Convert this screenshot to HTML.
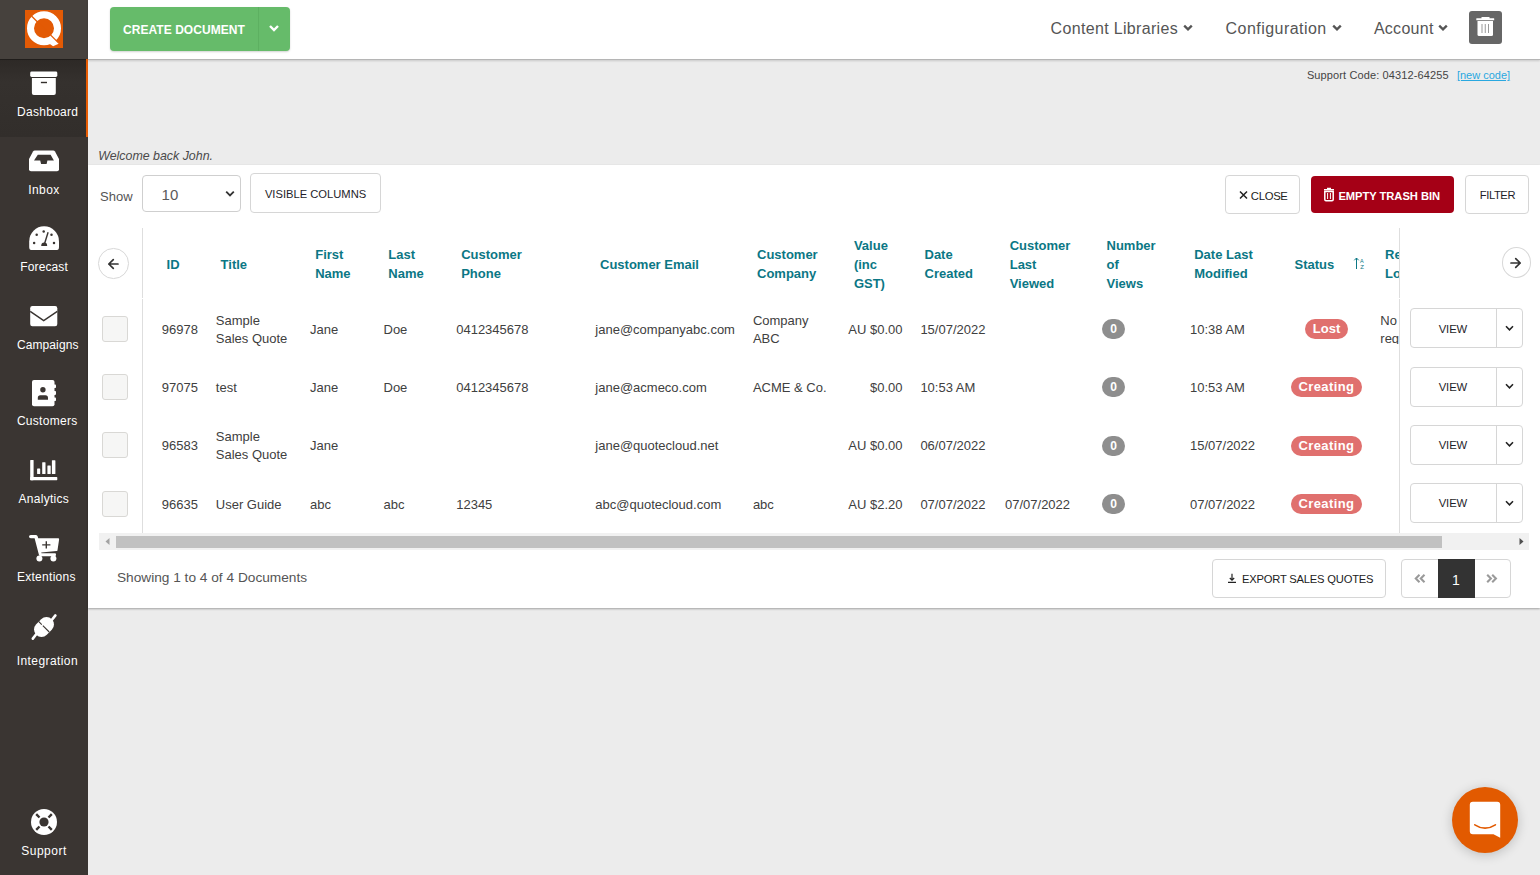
<!DOCTYPE html>
<html><head><meta charset="utf-8">
<style>
*{box-sizing:border-box;margin:0;padding:0}
html,body{width:1540px;height:875px;overflow:hidden}
body{font-family:"Liberation Sans",sans-serif;background:#ececec;position:relative;color:#333}
.a{position:absolute}
.t{position:absolute;white-space:nowrap}
.bx{position:absolute;border:1px solid #d9d9d9;border-radius:3px;background:#fff}
</style></head><body>
<div class="a" style="left:0;top:0;width:88px;height:875px;background:#3a3532"></div>
<div class="a" style="left:0;top:0;width:88px;height:59px;background:#46413d"></div>
<svg class="a" style="left:25px;top:10px" width="38" height="38" viewBox="0 0 38 38">
<rect width="38" height="38" fill="#e35a05"/>
<circle cx="19" cy="18.2" r="13.5" fill="none" stroke="#fff" stroke-width="7"/>
<path d="M25 25 L34.2 33.6 L28.1 36.2 L25.2 34.2 Z" fill="#fff"/>
<path d="M6.5 6 L34.5 33.9" stroke="#e35a05" stroke-width="1.3"/>
</svg>
<div class="a" style="left:0;top:59px;width:86px;height:78px;background:linear-gradient(#2d2926,#35312e 30%,#322e2b)"></div>
<div class="a" style="left:0;top:59px;width:86px;height:1px;background:#201d1b"></div>
<div class="a" style="left:86px;top:59px;width:2px;height:78px;background:#e85d04"></div>
<svg class="a" style="left:0;top:0" width="88" height="875" viewBox="0 0 88 875">
<g fill="#fff">
<!-- dashboard archive -->
<rect x="30.2" y="71.6" width="27.1" height="5.4" rx="1.4"/>
<path d="M31.9 78.1 H55.8 V93 Q55.8 94.9 53.9 94.9 H33.8 Q31.9 94.9 31.9 93 Z"/>
<!-- inbox -->
<path d="M34.8 150.6 H53.2 Q54.4 150.6 55 151.6 L59 159 V169.2 Q59 171.2 57 171.2 H31 Q29 171.2 29 169.2 V159 L33 151.6 Q33.6 150.6 34.8 150.6 Z"/>
<!-- forecast gauge -->
<path d="M31.2 249.9 Q29.2 249.9 29.2 247 V241.4 A14.9 15.2 0 0 1 59 241.4 V247 Q59 249.9 57 249.9 Z"/>
<!-- envelope -->
<rect x="30.2" y="306" width="27.1" height="20.2" rx="2.2"/>
<!-- address book -->
<rect x="32" y="380" width="22.5" height="26.3" rx="2"/>
<rect x="53" y="384.5" width="3" height="3.6" rx=".8"/>
<rect x="53" y="390.9" width="3" height="4" rx=".8"/>
<rect x="53" y="397.5" width="3" height="3.5" rx=".8"/>
<!-- analytics -->
<rect x="30.2" y="460" width="3.4" height="20.2" rx=".6"/>
<rect x="30.2" y="477.1" width="27.1" height="3.1" rx=".6"/>
<rect x="37.1" y="468.5" width="3.1" height="5.5" rx=".5"/>
<rect x="42.2" y="462.3" width="3.3" height="11.7" rx=".5"/>
<rect x="47.4" y="465.4" width="3.3" height="8.6" rx=".5"/>
<rect x="51.9" y="460.3" width="3.5" height="13.7" rx=".5"/>
<!-- cart -->
<path d="M30.8 535 H36 Q37.4 535 37.7 536.5 L38.2 538.3 H58.2 Q59.3 538.3 59.1 539.4 L57.5 550.2 Q57.3 551 56.5 551.1 L41.2 552.4 L41.5 553.2 H55 Q56 553.2 56 554.6 Q56 556.2 55 556.2 H40.5 Q39.2 556.2 38.9 554.8 L34.6 538.2 H30.8 Q29 538.2 29 536.6 Q29 535 30.8 535 Z"/>
<circle cx="39.4" cy="558.4" r="3"/>
<circle cx="53.4" cy="558.4" r="3"/>
<!-- plug -->
<rect x="33" y="619.5" width="22" height="15" rx="7.5" transform="rotate(-45 44 627)"/>
<path d="M51 621 L55.4 615.4" stroke="#fff" stroke-width="2.6" stroke-linecap="round"/>
<path d="M37 633.2 L32.8 638.6" stroke="#fff" stroke-width="2.6" stroke-linecap="round"/>
<!-- support ring -->
<circle cx="44" cy="822" r="13"/>
</g>
<g fill="DDD">
<rect x="40.9" y="81.8" width="6.1" height="1.4" fill="#332f2c"/>
<path d="M37.8 154.8 H50.6 L53.9 160.6 H47.4 L46.6 164 H41.1 L40.2 160.6 H34 Z" fill="#3a3532"/>
<circle cx="36.7" cy="234.8" r="1.25" fill="#3a3532"/>
<circle cx="43.7" cy="231.5" r="1.25" fill="#3a3532"/>
<circle cx="51.5" cy="234.8" r="1.25" fill="#3a3532"/>
<circle cx="34.1" cy="243" r="1.25" fill="#3a3532"/>
<circle cx="54" cy="243" r="1.25" fill="#3a3532"/>
<path d="M44.6 243.5 L48.1 232.2" stroke="#3a3532" stroke-width="1.4"/>
<path d="M41.2 245.9 A3 3.4 0 0 1 47.2 245.9 Z" fill="#3a3532"/>
<path d="M30.2 311.4 L43.7 320.6 L57.3 311.4" fill="none" stroke="#3a3532" stroke-width="1.5"/>
<circle cx="42.9" cy="389.8" r="2.7" fill="#3a3532"/>
<path d="M37.8 399.8 V397.8 Q37.8 395.2 40.4 395.2 H45.4 Q48 395.2 48 397.8 V399.8 Z" fill="#3a3532"/>
<path d="M46.3 541.2 V548.6 M42.2 544.9 H50.4" stroke="#3a3532" stroke-width="1.4"/>
<path d="M38.6 621.4 L49.6 632.4" stroke="#3a3532" stroke-width="1.1" stroke-dasharray="4.5 1.5 9"/>
<circle cx="44" cy="822" r="4.6" fill="#3a3532"/>
<path d="M36.2 814.2 L39.5 817.5 M51.8 814.2 L48.5 817.5 M36.2 829.8 L39.5 826.5 M51.8 829.8 L48.5 826.5" stroke="#3a3532" stroke-width="2.4"/>
</g>
</svg>
<div class="t" style="left:17px;top:103.6px;font-size:12px;line-height:16px;color:#fff;letter-spacing:0.29px;">Dashboard</div>
<div class="t" style="left:28.2px;top:181.6px;font-size:12px;line-height:16px;color:#fff;letter-spacing:0.42px;">Inbox</div>
<div class="t" style="left:20.3px;top:258.6px;font-size:12px;line-height:16px;color:#fff;letter-spacing:0.11px;">Forecast</div>
<div class="t" style="left:16.9px;top:336.6px;font-size:12px;line-height:16px;color:#fff;letter-spacing:0.11px;">Campaigns</div>
<div class="t" style="left:16.9px;top:413.3px;font-size:12px;line-height:16px;color:#fff;letter-spacing:0.29px;">Customers</div>
<div class="t" style="left:18.6px;top:490.6px;font-size:12px;line-height:16px;color:#fff;letter-spacing:0.27px;">Analytics</div>
<div class="t" style="left:16.9px;top:568.6px;font-size:12px;line-height:16px;color:#fff;letter-spacing:0.29px;">Extentions</div>
<div class="t" style="left:16.8px;top:652.6px;font-size:12px;line-height:16px;color:#fff;letter-spacing:0.41px;">Integration</div>
<div class="t" style="left:21.2px;top:842.8px;font-size:12px;line-height:16px;color:#fff;letter-spacing:0.51px;">Support</div>
<div class="a" style="left:88px;top:0;width:1452px;height:60px;background:#fff;border-bottom:1px solid #b5b5b5;box-shadow:0 1px 2px rgba(0,0,0,.15)"></div>
<div class="a" style="left:110px;top:7px;width:180px;height:44px;background:#66bb6a;border-radius:4px;box-shadow:0 1px 2px rgba(0,0,0,.18)"></div>
<div class="a" style="left:258px;top:7px;width:1px;height:44px;background:#5db061"></div>
<div class="t" style="left:123px;top:21.8px;font-size:12px;line-height:16px;color:#fff;font-weight:bold;letter-spacing:0.05px;">CREATE DOCUMENT</div>
<svg class="a" style="left:268px;top:24px" width="12" height="9" viewBox="0 0 12 9"><path d="M2 2 L6 6 L10 2" fill="none" stroke="#fff" stroke-width="2.4"/></svg>
<div class="t" style="left:1050.6px;top:18.2px;font-size:16px;line-height:21px;color:#555;letter-spacing:0.33px;">Content Libraries</div>
<div class="t" style="left:1225.6px;top:18.2px;font-size:16px;line-height:21px;color:#555;letter-spacing:0.45px;">Configuration</div>
<div class="t" style="left:1373.9px;top:18.2px;font-size:16px;line-height:21px;color:#555;letter-spacing:0.28px;">Account</div>
<svg class="a" style="left:1183px;top:24px" width="10" height="8" viewBox="0 0 10 8"><path d="M1.2 1.6 L5 5.4 L8.8 1.6" fill="none" stroke="#555" stroke-width="2.3"/></svg>
<svg class="a" style="left:1331.5px;top:24px" width="10" height="8" viewBox="0 0 10 8"><path d="M1.2 1.6 L5 5.4 L8.8 1.6" fill="none" stroke="#555" stroke-width="2.3"/></svg>
<svg class="a" style="left:1437.8px;top:24px" width="10" height="8" viewBox="0 0 10 8"><path d="M1.2 1.6 L5 5.4 L8.8 1.6" fill="none" stroke="#555" stroke-width="2.3"/></svg>
<div class="a" style="left:1469px;top:11px;width:33px;height:33px;background:#666;border-radius:3px"></div>
<svg class="a" style="left:1469px;top:11px" width="33" height="33" viewBox="0 0 33 33">
<path d="M12.5 6 H20.5 V7.2 H24.8 Q25.2 7.2 25.2 7.6 V9.2 H7.3 V7.6 Q7.3 7.2 7.7 7.2 H12.5 Z" fill="#fff"/>
<path d="M8.5 10 H24 V23.5 Q24 25 22.5 25 H10 Q8.5 25 8.5 23.5 Z" fill="#fff"/>
<path d="M13 13 V22 M16.25 13 V22 M19.5 13 V22" stroke="#999" stroke-width="1"/>
</svg>
<div class="t" style="left:1306.9px;top:68.1px;font-size:11px;line-height:14px;color:#444;letter-spacing:0.12px;">Support Code: 04312-64255</div>
<div class="t" style="left:1456.9px;top:68.1px;font-size:11px;line-height:14px;color:#29a8e0;text-decoration:underline">[new code]</div>
<div class="t" style="left:98.2px;top:148.1px;font-size:12.4px;line-height:16px;color:#4a4a4a;font-style:italic">Welcome back John.</div>
<div class="a" style="left:88px;top:165px;width:1452px;height:443px;background:#fff;box-shadow:0 1px 2px rgba(0,0,0,.32)"></div>
<div class="t" style="left:100px;top:187.6px;font-size:13px;line-height:17px;color:#555;letter-spacing:0.05px;">Show</div>
<div class="bx" style="left:142px;top:175px;width:99px;height:37px;border-color:#cfcfcf;border-radius:4px"></div>
<div class="t" style="left:161.5px;top:184.8px;font-size:15px;line-height:20px;color:#5a5a5a;letter-spacing:0.2px;">10</div>
<svg class="a" style="left:225px;top:189.5px" width="10" height="8" viewBox="0 0 10 8"><path d="M1.2 1.6 L5 5.4 L8.8 1.6" fill="none" stroke="#333" stroke-width="1.8"/></svg>
<div class="bx" style="left:250px;top:173px;width:131px;height:40px;border-color:#d6d6d6;border-radius:4px"></div>
<div class="t" style="left:264.9px;top:187.1px;font-size:11.2px;line-height:15px;color:#1e1e2a;">VISIBLE COLUMNS</div>
<div class="bx" style="left:1225px;top:175px;width:75px;height:39px;border-color:#d6d6d6;border-radius:4px"></div>
<svg class="a" style="left:1239px;top:190px" width="9" height="10" viewBox="0 0 9 10"><path d="M1 1.5 L8 8.5 M8 1.5 L1 8.5" stroke="#222" stroke-width="1.5"/></svg>
<div class="t" style="left:1250.8px;top:188.8px;font-size:11.3px;line-height:15px;color:#222;letter-spacing:-0.3px;">CLOSE</div>
<div class="a" style="left:1311px;top:176px;width:143px;height:37px;background:#a50016;border-radius:4px"></div>
<svg class="a" style="left:1323px;top:187px" width="12" height="15" viewBox="0 0 12 15">
<path d="M4 .8 H8 V2 H11 V3.6 H1 V2 H4 Z" fill="#fff"/>
<path d="M1.8 4.4 H10.2 V12.6 Q10.2 13.8 9 13.8 H3 Q1.8 13.8 1.8 12.6 Z" fill="none" stroke="#fff" stroke-width="1.5"/>
<path d="M4.6 6 V12 M7.4 6 V12" stroke="#fff" stroke-width="1"/>
</svg>
<div class="t" style="left:1338.4px;top:188.8px;font-size:11.2px;line-height:15px;color:#fff;font-weight:bold;letter-spacing:-0.05px;">EMPTY TRASH BIN</div>
<div class="bx" style="left:1465px;top:175px;width:64px;height:39px;border-color:#d6d6d6;border-radius:4px"></div>
<div class="t" style="left:1479.8px;top:187.8px;font-size:11.2px;line-height:15px;color:#1e1e2a;letter-spacing:-0.4px;">FILTER</div>
<div class="a" style="left:98px;top:248px;width:30.5px;height:30.5px;border:1px solid #d8d8d8;border-radius:50%;background:#fff"></div>
<svg class="a" style="left:106px;top:256.5px" width="14" height="14" viewBox="0 0 14 14"><path d="M12 7 H2.8 M7.3 2.6 L2.8 7 L7.3 11.4" fill="none" stroke="#333" stroke-width="1.7" stroke-linecap="round" stroke-linejoin="round"/></svg>
<div class="a" style="left:1502px;top:247px;width:29px;height:30.5px;border:1px solid #d8d8d8;border-radius:50%;background:#fff"></div>
<svg class="a" style="left:1509px;top:255.5px" width="14" height="14" viewBox="0 0 14 14"><path d="M2 7 H11.2 M6.7 2.6 L11.2 7 L6.7 11.4" fill="none" stroke="#333" stroke-width="1.7" stroke-linecap="round" stroke-linejoin="round"/></svg>
<div class="a" style="left:142px;top:228px;width:1px;height:305px;background:#dedede"></div>
<div class="a" style="left:1399px;top:228px;width:1px;height:305px;background:#dedede"></div>
<div class="a" style="left:142px;top:297.5px;width:1px;height:1px;background:#fff"></div>
<div class="a" style="left:1399px;top:297.5px;width:1px;height:1px;background:#fff"></div>
<div class="t" style="left:166.6px;top:256.1px;font-size:13px;line-height:17px;color:#0b7785;font-weight:bold;">ID</div>
<div class="t" style="left:220.6px;top:256.1px;font-size:13px;line-height:17px;color:#0b7785;font-weight:bold;">Title</div>
<div class="t" style="left:315.2px;top:246.1px;font-size:13px;line-height:17px;color:#0b7785;font-weight:bold;">First</div>
<div class="t" style="left:315.2px;top:265.0px;font-size:13px;line-height:17px;color:#0b7785;font-weight:bold;">Name</div>
<div class="t" style="left:388.3px;top:246.1px;font-size:13px;line-height:17px;color:#0b7785;font-weight:bold;">Last</div>
<div class="t" style="left:388.3px;top:265.0px;font-size:13px;line-height:17px;color:#0b7785;font-weight:bold;">Name</div>
<div class="t" style="left:461.2px;top:246.1px;font-size:13px;line-height:17px;color:#0b7785;font-weight:bold;">Customer</div>
<div class="t" style="left:461.2px;top:265.0px;font-size:13px;line-height:17px;color:#0b7785;font-weight:bold;">Phone</div>
<div class="t" style="left:600px;top:256.1px;font-size:13px;line-height:17px;color:#0b7785;font-weight:bold;">Customer Email</div>
<div class="t" style="left:757px;top:246.1px;font-size:13px;line-height:17px;color:#0b7785;font-weight:bold;">Customer</div>
<div class="t" style="left:757px;top:265.0px;font-size:13px;line-height:17px;color:#0b7785;font-weight:bold;">Company</div>
<div class="t" style="left:853.9px;top:237.2px;font-size:13px;line-height:17px;color:#0b7785;font-weight:bold;">Value</div>
<div class="t" style="left:853.9px;top:256.1px;font-size:13px;line-height:17px;color:#0b7785;font-weight:bold;">(inc</div>
<div class="t" style="left:853.9px;top:275.0px;font-size:13px;line-height:17px;color:#0b7785;font-weight:bold;">GST)</div>
<div class="t" style="left:924.5px;top:246.1px;font-size:13px;line-height:17px;color:#0b7785;font-weight:bold;">Date</div>
<div class="t" style="left:924.5px;top:265.0px;font-size:13px;line-height:17px;color:#0b7785;font-weight:bold;">Created</div>
<div class="t" style="left:1009.7px;top:237.2px;font-size:13px;line-height:17px;color:#0b7785;font-weight:bold;">Customer</div>
<div class="t" style="left:1009.7px;top:256.1px;font-size:13px;line-height:17px;color:#0b7785;font-weight:bold;">Last</div>
<div class="t" style="left:1009.7px;top:275.0px;font-size:13px;line-height:17px;color:#0b7785;font-weight:bold;">Viewed</div>
<div class="t" style="left:1106.5px;top:237.2px;font-size:13px;line-height:17px;color:#0b7785;font-weight:bold;">Number</div>
<div class="t" style="left:1106.5px;top:256.1px;font-size:13px;line-height:17px;color:#0b7785;font-weight:bold;">of</div>
<div class="t" style="left:1106.5px;top:275.0px;font-size:13px;line-height:17px;color:#0b7785;font-weight:bold;">Views</div>
<div class="t" style="left:1194.2px;top:246.1px;font-size:13px;line-height:17px;color:#0b7785;font-weight:bold;">Date Last</div>
<div class="t" style="left:1194.2px;top:265.0px;font-size:13px;line-height:17px;color:#0b7785;font-weight:bold;">Modified</div>
<div class="t" style="left:1294.5px;top:256.1px;font-size:13px;line-height:17px;color:#0b7785;font-weight:bold;">Status</div>
<div class="a" style="left:1380px;top:228px;width:19px;height:72px;overflow:hidden"><div class="t" style="left:5px;top:18.1px;font-size:13px;line-height:17px;color:#0b7785;font-weight:bold;">Re</div>
<div class="t" style="left:5px;top:37.0px;font-size:13px;line-height:17px;color:#0b7785;font-weight:bold;">Lo</div>
</div>
<svg class="a" style="left:1353px;top:256px" width="14" height="15" viewBox="0 0 14 15">
<path d="M3.5 13 V2 M1.3 4.3 L3.5 2 L5.7 4.3" fill="none" stroke="#0b7785" stroke-width="1"/>
<text x="7" y="6.5" font-size="5.5" fill="#0b7785" font-family="Liberation Sans">A</text>
<text x="7.2" y="13" font-size="6" fill="#0b7785" font-family="Liberation Sans">Z</text>
</svg>
<div class="a" style="left:102px;top:316.4px;width:26px;height:26px;border:1px solid #d9d8d5;border-radius:3px;background:#f6f6f5"></div>
<div class="t" style="left:161.8px;top:320.9px;font-size:13px;line-height:17px;color:#404040;">96978</div>
<div class="t" style="left:215.8px;top:311.9px;font-size:13px;line-height:17px;color:#404040;">Sample</div>
<div class="t" style="left:215.8px;top:329.9px;font-size:13px;line-height:17px;color:#404040;">Sales Quote</div>
<div class="t" style="left:310px;top:320.9px;font-size:13px;line-height:17px;color:#404040;">Jane</div>
<div class="t" style="left:383.5px;top:320.9px;font-size:13px;line-height:17px;color:#404040;">Doe</div>
<div class="t" style="left:456.2px;top:320.9px;font-size:13px;line-height:17px;color:#404040;">0412345678</div>
<div class="t" style="left:595.3px;top:320.9px;font-size:13px;line-height:17px;color:#404040;">jane@companyabc.com</div>
<div class="t" style="left:752.9px;top:311.9px;font-size:13px;line-height:17px;color:#404040;">Company</div>
<div class="t" style="left:752.9px;top:329.9px;font-size:13px;line-height:17px;color:#404040;">ABC</div>
<div class="t" style="right:637.5px;top:320.9px;font-size:13px;line-height:17px;color:#404040">AU $0.00</div>
<div class="t" style="left:920.4px;top:320.9px;font-size:13px;line-height:17px;color:#404040;">15/07/2022</div>
<div class="a" style="left:1102px;top:319.0px;width:23px;height:20px;border-radius:10px;background:#8e8e8e;color:#fff;font-weight:bold;font-size:12px;line-height:20px;text-align:center">0</div>
<div class="t" style="left:1190px;top:320.9px;font-size:13px;line-height:17px;color:#404040;">10:38 AM</div>
<div class="a" style="left:1305px;top:319.0px;width:43px;height:20px;border-radius:10px;background:#e0706e;color:#fff;font-weight:bold;font-size:13px;line-height:20px;text-align:center">Lost</div>
<div class="a" style="left:1370px;top:303.9px;width:29px;height:40px;overflow:hidden"><div class="t" style="left:10.3px;top:8.0px;font-size:13px;line-height:17px;color:#404040;">No</div>
<div class="t" style="left:10.3px;top:26.0px;font-size:13px;line-height:17px;color:#404040;">req</div>
</div>
<div class="bx" style="left:1409.5px;top:308.4px;width:113px;height:40px;border-color:#d6d6d6;border-radius:4px"></div>
<div class="a" style="left:1496px;top:308.4px;width:1px;height:40px;background:#d6d6d6"></div>
<div class="t" style="left:1438.7px;top:321.5px;font-size:11.3px;line-height:15px;color:#1e1e2a;letter-spacing:-0.1px;">VIEW</div>
<svg class="a" style="left:1505px;top:324.9px" width="9" height="7" viewBox="0 0 9 7"><path d="M1 1.3 L4.5 4.8 L8 1.3" fill="none" stroke="#222" stroke-width="1.6"/></svg>
<div class="a" style="left:102px;top:374px;width:26px;height:26px;border:1px solid #d9d8d5;border-radius:3px;background:#f6f6f5"></div>
<div class="t" style="left:161.8px;top:379.2px;font-size:13px;line-height:17px;color:#404040;">97075</div>
<div class="t" style="left:215.8px;top:379.2px;font-size:13px;line-height:17px;color:#404040;">test</div>
<div class="t" style="left:310px;top:379.2px;font-size:13px;line-height:17px;color:#404040;">Jane</div>
<div class="t" style="left:383.5px;top:379.2px;font-size:13px;line-height:17px;color:#404040;">Doe</div>
<div class="t" style="left:456.2px;top:379.2px;font-size:13px;line-height:17px;color:#404040;">0412345678</div>
<div class="t" style="left:595.3px;top:379.2px;font-size:13px;line-height:17px;color:#404040;">jane@acmeco.com</div>
<div class="t" style="left:752.9px;top:379.2px;font-size:13px;line-height:17px;color:#404040;">ACME &amp; Co.</div>
<div class="t" style="right:637.5px;top:379.2px;font-size:13px;line-height:17px;color:#404040">$0.00</div>
<div class="t" style="left:920.4px;top:379.2px;font-size:13px;line-height:17px;color:#404040;">10:53 AM</div>
<div class="a" style="left:1102px;top:377.3px;width:23px;height:20px;border-radius:10px;background:#8e8e8e;color:#fff;font-weight:bold;font-size:12px;line-height:20px;text-align:center">0</div>
<div class="t" style="left:1190px;top:379.2px;font-size:13px;line-height:17px;color:#404040;">10:53 AM</div>
<div class="a" style="left:1290.5px;top:377.3px;width:71.5px;height:20px;border-radius:10px;background:#e0706e;color:#fff;font-weight:bold;font-size:13px;line-height:20px;text-align:center;letter-spacing:.4px;text-indent:.4px">Creating</div>
<div class="bx" style="left:1409.5px;top:366.7px;width:113px;height:40px;border-color:#d6d6d6;border-radius:4px"></div>
<div class="a" style="left:1496px;top:366.7px;width:1px;height:40px;background:#d6d6d6"></div>
<div class="t" style="left:1438.7px;top:379.8px;font-size:11.3px;line-height:15px;color:#1e1e2a;letter-spacing:-0.1px;">VIEW</div>
<svg class="a" style="left:1505px;top:383.2px" width="9" height="7" viewBox="0 0 9 7"><path d="M1 1.3 L4.5 4.8 L8 1.3" fill="none" stroke="#222" stroke-width="1.6"/></svg>
<div class="a" style="left:102px;top:432.4px;width:26px;height:26px;border:1px solid #d9d8d5;border-radius:3px;background:#f6f6f5"></div>
<div class="t" style="left:161.8px;top:437.4px;font-size:13px;line-height:17px;color:#404040;">96583</div>
<div class="t" style="left:215.8px;top:428.4px;font-size:13px;line-height:17px;color:#404040;">Sample</div>
<div class="t" style="left:215.8px;top:446.4px;font-size:13px;line-height:17px;color:#404040;">Sales Quote</div>
<div class="t" style="left:310px;top:437.4px;font-size:13px;line-height:17px;color:#404040;">Jane</div>
<div class="t" style="left:595.3px;top:437.4px;font-size:13px;line-height:17px;color:#404040;">jane@quotecloud.net</div>
<div class="t" style="right:637.5px;top:437.4px;font-size:13px;line-height:17px;color:#404040">AU $0.00</div>
<div class="t" style="left:920.4px;top:437.4px;font-size:13px;line-height:17px;color:#404040;">06/07/2022</div>
<div class="a" style="left:1102px;top:435.5px;width:23px;height:20px;border-radius:10px;background:#8e8e8e;color:#fff;font-weight:bold;font-size:12px;line-height:20px;text-align:center">0</div>
<div class="t" style="left:1190px;top:437.4px;font-size:13px;line-height:17px;color:#404040;">15/07/2022</div>
<div class="a" style="left:1290.5px;top:435.5px;width:71.5px;height:20px;border-radius:10px;background:#e0706e;color:#fff;font-weight:bold;font-size:13px;line-height:20px;text-align:center;letter-spacing:.4px;text-indent:.4px">Creating</div>
<div class="bx" style="left:1409.5px;top:424.9px;width:113px;height:40px;border-color:#d6d6d6;border-radius:4px"></div>
<div class="a" style="left:1496px;top:424.9px;width:1px;height:40px;background:#d6d6d6"></div>
<div class="t" style="left:1438.7px;top:438.0px;font-size:11.3px;line-height:15px;color:#1e1e2a;letter-spacing:-0.1px;">VIEW</div>
<svg class="a" style="left:1505px;top:441.4px" width="9" height="7" viewBox="0 0 9 7"><path d="M1 1.3 L4.5 4.8 L8 1.3" fill="none" stroke="#222" stroke-width="1.6"/></svg>
<div class="a" style="left:102px;top:491.2px;width:26px;height:26px;border:1px solid #d9d8d5;border-radius:3px;background:#f6f6f5"></div>
<div class="t" style="left:161.8px;top:495.6px;font-size:13px;line-height:17px;color:#404040;">96635</div>
<div class="t" style="left:215.8px;top:495.6px;font-size:13px;line-height:17px;color:#404040;">User Guide</div>
<div class="t" style="left:310px;top:495.6px;font-size:13px;line-height:17px;color:#404040;">abc</div>
<div class="t" style="left:383.5px;top:495.6px;font-size:13px;line-height:17px;color:#404040;">abc</div>
<div class="t" style="left:456.2px;top:495.6px;font-size:13px;line-height:17px;color:#404040;">12345</div>
<div class="t" style="left:595.3px;top:495.6px;font-size:13px;line-height:17px;color:#404040;">abc@quotecloud.com</div>
<div class="t" style="left:752.9px;top:495.6px;font-size:13px;line-height:17px;color:#404040;">abc</div>
<div class="t" style="right:637.5px;top:495.6px;font-size:13px;line-height:17px;color:#404040">AU $2.20</div>
<div class="t" style="left:920.4px;top:495.6px;font-size:13px;line-height:17px;color:#404040;">07/07/2022</div>
<div class="t" style="left:1005px;top:495.6px;font-size:13px;line-height:17px;color:#404040;">07/07/2022</div>
<div class="a" style="left:1102px;top:493.7px;width:23px;height:20px;border-radius:10px;background:#8e8e8e;color:#fff;font-weight:bold;font-size:12px;line-height:20px;text-align:center">0</div>
<div class="t" style="left:1190px;top:495.6px;font-size:13px;line-height:17px;color:#404040;">07/07/2022</div>
<div class="a" style="left:1290.5px;top:493.7px;width:71.5px;height:20px;border-radius:10px;background:#e0706e;color:#fff;font-weight:bold;font-size:13px;line-height:20px;text-align:center;letter-spacing:.4px;text-indent:.4px">Creating</div>
<div class="bx" style="left:1409.5px;top:483.1px;width:113px;height:40px;border-color:#d6d6d6;border-radius:4px"></div>
<div class="a" style="left:1496px;top:483.1px;width:1px;height:40px;background:#d6d6d6"></div>
<div class="t" style="left:1438.7px;top:496.2px;font-size:11.3px;line-height:15px;color:#1e1e2a;letter-spacing:-0.1px;">VIEW</div>
<svg class="a" style="left:1505px;top:499.6px" width="9" height="7" viewBox="0 0 9 7"><path d="M1 1.3 L4.5 4.8 L8 1.3" fill="none" stroke="#222" stroke-width="1.6"/></svg>
<div class="a" style="left:99px;top:533px;width:1430px;height:17px;background:#f1f1f1"></div>
<div class="a" style="left:116px;top:535.5px;width:1326px;height:12.5px;background:#c1c1c1"></div>
<svg class="a" style="left:104px;top:537px" width="8" height="9" viewBox="0 0 8 9"><path d="M1.5 4.5 L5.5 1 V8 Z" fill="#a3a3a3"/></svg>
<svg class="a" style="left:1517px;top:537px" width="8" height="9" viewBox="0 0 8 9"><path d="M6.5 4.5 L2.5 1 V8 Z" fill="#505050"/></svg>
<div class="t" style="left:116.9px;top:568.6px;font-size:13.7px;line-height:18px;color:#555;">Showing 1 to 4 of 4 Documents</div>
<div class="bx" style="left:1212px;top:559px;width:174px;height:39px;border-color:#d6d6d6;border-radius:4px"></div>
<svg class="a" style="left:1227px;top:573px" width="10" height="11" viewBox="0 0 10 11"><path d="M5 .8 V7.2 M2.8 5 L5 7.2 L7.2 5 M1 9.4 H9" fill="none" stroke="#222" stroke-width="1.2"/></svg>
<div class="t" style="left:1242px;top:571.6px;font-size:11.2px;line-height:15px;color:#222;letter-spacing:-0.2px;">EXPORT SALES QUOTES</div>
<div class="bx" style="left:1401px;top:559px;width:110px;height:39px;border-color:#d6d6d6;border-radius:4px"></div>
<div class="a" style="left:1438px;top:559px;width:37px;height:39px;background:#333"></div>
<div class="t" style="left:1452px;top:570.6px;font-size:14px;line-height:18px;color:#fff;">1</div>
<svg class="a" style="left:1413px;top:573px" width="14" height="11" viewBox="0 0 14 11"><path d="M6.5 1.8 L2.8 5.5 L6.5 9.2 M11.5 1.8 L7.8 5.5 L11.5 9.2" fill="none" stroke="#9a9a9a" stroke-width="2.1"/></svg>
<svg class="a" style="left:1485px;top:573px" width="14" height="11" viewBox="0 0 14 11"><path d="M2.2 1.8 L5.9 5.5 L2.2 9.2 M7.2 1.8 L10.9 5.5 L7.2 9.2" fill="none" stroke="#9a9a9a" stroke-width="2.1"/></svg>
<div class="a" style="left:1452px;top:787px;width:66px;height:66px;border-radius:50%;background:#e25a00;box-shadow:0 2px 12px rgba(0,0,0,.2)"></div>
<svg class="a" style="left:1452px;top:787px" width="66" height="66" viewBox="0 0 66 66">
<path d="M17.8 17.8 Q17.8 14.8 20.8 14.8 H45.2 Q48.2 14.8 48.2 17.8 V50.8 L41.5 47.2 H20.8 Q17.8 47.2 17.8 44.2 Z" fill="#fff"/>
<path d="M22.8 37.8 Q33 44.5 43.4 37.8" fill="none" stroke="#e25a00" stroke-width="1.6" stroke-linecap="round"/>
</svg>
</body></html>
